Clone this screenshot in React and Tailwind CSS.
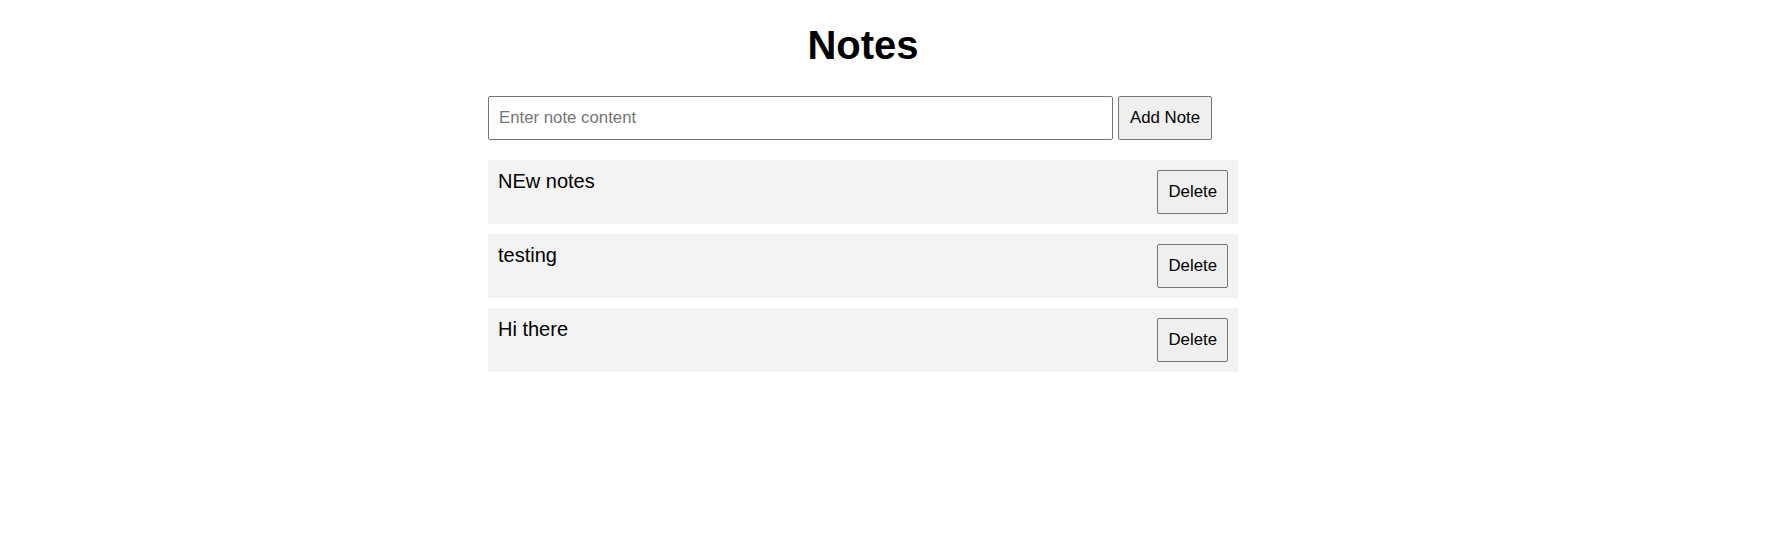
import React, { useState } from 'react';

export default function App() {
    const [notes, setNotes] = useState([
        { id: 1, content: 'NEw notes' },
        { id: 2, content: 'testing' },
        { id: 3, content: 'Hi there' },
    ]);
    const [text, setText] = useState('');

    const addNote = () => {
        if (!text.trim()) return;
        setNotes([...notes, { id: Date.now(), content: text }]);
        setText('');
    };

    const deleteNote = (id) => setNotes(notes.filter(n => n.id !== id));

    return (
        <div className="min-h-[548px] bg-white text-black font-['Liberation_Sans',Arial,sans-serif]">
            <div className="ml-[488px] w-[750px] pt-[23px]">
                <h1 className="text-center text-[40px] font-bold leading-[normal]">Notes</h1>

                <div className="mt-[28px] flex gap-[5px]">
                    <input
                        type="text"
                        value={text}
                        onChange={e => setText(e.target.value)}
                        placeholder="Enter note content"
                        className="w-[625px] h-[44px] px-[10px] text-[16.8px] border border-[#767676] rounded-[2px] placeholder:text-[#757575] outline-none"
                    />
                    <button
                        onClick={addNote}
                        className="h-[44px] px-[11px] text-[16.8px] bg-[#efefef] border border-[#767676] rounded-[2px]"
                    >
                        Add Note
                    </button>
                </div>

                <div className="mt-[20px] flex flex-col gap-[10px]">
                    {notes.map(note => (
                        <div key={note.id} className="flex justify-between items-start p-[10px] bg-[#f3f3f3]">
                            <span className="text-[20px] leading-[normal]">{note.content}</span>
                            <button
                                onClick={() => deleteNote(note.id)}
                                className="h-[44px] px-[10px] text-[16.8px] bg-[#efefef] border border-[#767676] rounded-[2px]"
                            >
                                Delete
                            </button>
                        </div>
                    ))}
                </div>
            </div>
        </div>
    );
}
